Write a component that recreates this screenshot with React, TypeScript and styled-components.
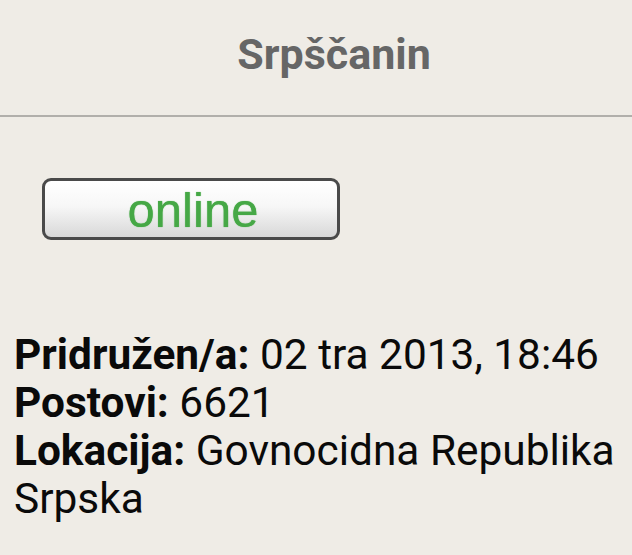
import React from "react";
import styled, { createGlobalStyle } from "styled-components";

const GlobalStyle = createGlobalStyle`
  html, body {
    margin: 0;
    padding: 0;
    background: #efece6;
  }
  body {
    font-family: Roboto, "Liberation Sans", sans-serif;
  }
`;

type Field = {
  label: string;
  value: string;
};

const fields: Field[] = [
  { label: "Pridružen/a:", value: "02 tra 2013, 18:46" },
  { label: "Postovi:", value: "6621" },
  { label: "Lokacija:", value: "Govnocidna Republika Srpska" },
];

const App = () => {
  return (
    <>
      <GlobalStyle />
      <Page>
        <Header>
          <Title>Srpščanin</Title>
        </Header>
        <Body>
          <StatusButton>online</StatusButton>
          <Details>
            {fields.map((f) => (
              <Row key={f.label}>
                <Label>{f.label}</Label> {f.value}
              </Row>
            ))}
          </Details>
        </Body>
      </Page>
    </>
  );
};

export default App;

const Page = styled.div`
  width: 632px;
  min-height: 555px;
  background: #efece6;
  display: flex;
  flex-direction: column;
  overflow: hidden;
`;

const Header = styled.div`
  height: 117px;
  box-sizing: border-box;
  display: flex;
  align-items: center;
  justify-content: center;
  border-bottom: 2px solid #b1afab;
  padding-left: 36px;
`;

const Title = styled.h1`
  margin: -8px 0 0 0;
  font-family: Roboto, sans-serif;
  font-weight: 700;
  font-size: 43px;
  line-height: normal;
  color: #666666;
`;

const Body = styled.div`
  display: flex;
  flex-direction: column;
  align-items: flex-start;
  padding: 61px 4px 0 14px;
`;

const StatusButton = styled.div`
  margin-left: 28px;
  width: 298px;
  height: 62px;
  box-sizing: border-box;
  border: 3px solid #4a4a4a;
  border-radius: 9px;
  background: linear-gradient(to bottom, #ffffff 0%, #f7f7f7 45%, #d8d8d8 100%);
  display: flex;
  align-items: center;
  justify-content: center;
  font-family: "Liberation Sans", Arial, sans-serif;
  font-size: 49px;
  line-height: 1;
  color: #46a846;
  text-shadow: 0 0 1px #46a846;
  padding: 2px 0 0 4px;
`;

const Details = styled.div`
  margin-top: 91px;
  font-family: Roboto, sans-serif;
  font-size: 42.4px;
  line-height: 48px;
  color: #0a0a0a;
`;

const Row = styled.div``;

const Label = styled.span`
  font-weight: 700;
`;
